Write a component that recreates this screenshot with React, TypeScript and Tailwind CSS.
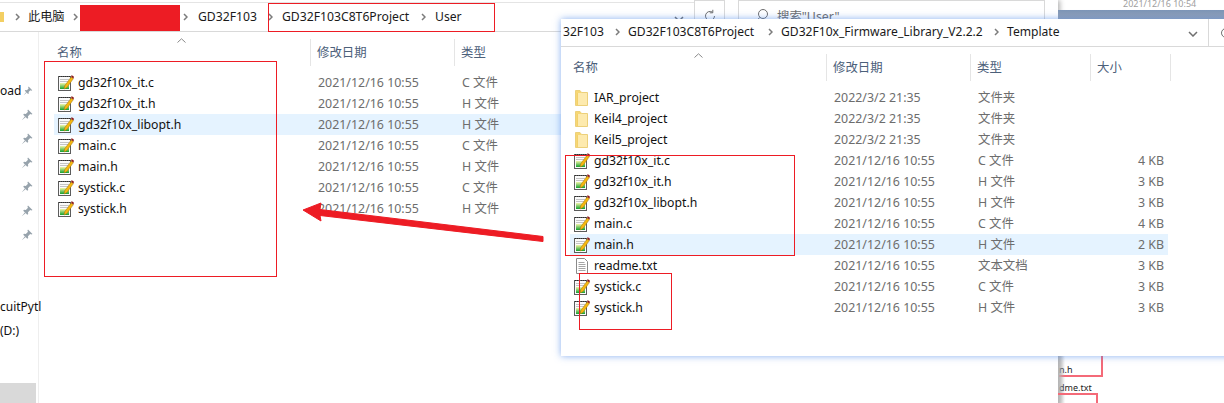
import React from "react";

const font = "font-['Noto_Sans','Noto_Sans_CJK_SC',sans-serif]";

function NoteIcon() {
  return (
    <svg width="16" height="16" viewBox="0 0 16 16" className="shrink-0">
      <defs>
        <linearGradient id="noteGreen" x1="0" y1="0" x2="0" y2="1">
          <stop offset="0" stopColor="#f2f5a8" />
          <stop offset="1" stopColor="#12a02e" />
        </linearGradient>
      </defs>
      <rect x="0.5" y="1.5" width="12" height="14" fill="#fbfbfb" stroke="#5c5c5c" />
      <path d="M1 1.500h11" stroke="#2f2f2f" strokeDasharray="1 1" />
      <path d="M2 4.500h9M2 6.500h9" stroke="#c4c4c4" />
      <rect x="2" y="8" width="9" height="6" fill="url(#noteGreen)" />
      <path d="M13.200 2 15.400 3.600 9 12.400 6 14 6.800 10.600Z" fill="#f6b80f" stroke="#9c7414" strokeWidth="0.5" />
      <path d="M13.600 0 16 1.800 15.400 3.600 13.200 2Z" fill="#8e1a1a" />
    </svg>
  );
}

function FolderIcon() {
  return (
    <svg width="16" height="16" viewBox="0 0 16 16" className="shrink-0">
      <path d="M1.500 0.500h4.500l1.500 2h6v13h-12z" fill="#f7d774" stroke="#ecd07a" />
      <rect x="3.500" y="3" width="9.500" height="12" fill="#fdeaae" />
      <path d="M3.500 3v12" stroke="#f3d06a" />
    </svg>
  );
}

function TextIcon() {
  return (
    <svg width="16" height="16" viewBox="0 0 16 16" className="shrink-0">
      <path d="M2.500 0.500h8l3 3v12h-11z" fill="#fff" stroke="#8a8a8a" />
      <path d="M4.500 4.500h6M4.500 6.500h7M4.500 8.500h7M4.500 10.500h7M4.500 12.500h7" stroke="#a5a5a5" />
    </svg>
  );
}

function Sep() {
  return (
    <svg width="5" height="8" viewBox="0 0 5 8" className="shrink-0">
      <path d="M1 1l3 3-3 3" fill="none" stroke="#7c7c7c" strokeWidth="1.500" />
    </svg>
  );
}

function Pin() {
  return (
    <svg width="12" height="12" viewBox="0 0 12 12">
      <path d="M7 0.500 11.500 5 10.300 5.600 9.200 5 7 7.200 7.200 9 6.300 9.800 2.200 5.700 3 4.800 4.800 5 7 2.800 6.400 1.700Z M3.800 7.500 0.800 11.200 4.500 8.200Z" fill="#97a3ac" />
    </svg>
  );
}

function Caret() {
  return (
    <svg width="9" height="5" viewBox="0 0 9 5">
      <path d="M0.500 4.500 4.500 0.800 8.500 4.500" fill="none" stroke="#8a8a8a" />
    </svg>
  );
}

type F = { name: string; date: string; type: string; size?: string; icon?: "note" | "folder" | "text"; hi?: boolean };

function Row({ f, withSize }: { f: F; withSize?: boolean }) {
  return (
    <div className={`flex h-[21px] items-center whitespace-nowrap ${f.hi ? "bg-[#e5f3ff]" : ""}`}>
      <div className="flex w-[264px] items-center gap-[4px] pl-[4px] text-[#111111]">
        {f.icon === "folder" ? <FolderIcon /> : f.icon === "text" ? <TextIcon /> : <NoteIcon />}
        <span className="pt-[2px] text-[12.25px]">{f.name}</span>
      </div>
      <div className="w-[144px] pt-[2px] text-[#6d6d6d]">{f.date}</div>
      <div className={`${withSize ? "w-[120px]" : ""} pt-[2px] text-[#6d6d6d]`}>{f.type}</div>
      {withSize && <div className="w-[70px] pr-[4px] pt-[2px] text-right text-[#6d6d6d]">{f.size}</div>}
    </div>
  );
}

const d = "2021/12/16 10:55";
const backFiles: F[] = [
  { name: "gd32f10x_it.c", date: d, type: "C 文件" },
  { name: "gd32f10x_it.h", date: d, type: "H 文件" },
  { name: "gd32f10x_libopt.h", date: d, type: "H 文件", hi: true },
  { name: "main.c", date: d, type: "C 文件" },
  { name: "main.h", date: d, type: "H 文件" },
  { name: "systick.c", date: d, type: "C 文件" },
  { name: "systick.h", date: d, type: "H 文件" },
];
const frontFiles: F[] = [
  { name: "IAR_project", date: "2022/3/2 21:35", type: "文件夹", icon: "folder" },
  { name: "Keil4_project", date: "2022/3/2 21:35", type: "文件夹", icon: "folder" },
  { name: "Keil5_project", date: "2022/3/2 21:35", type: "文件夹", icon: "folder" },
  { name: "gd32f10x_it.c", date: d, type: "C 文件", size: "4 KB" },
  { name: "gd32f10x_it.h", date: d, type: "H 文件", size: "3 KB" },
  { name: "gd32f10x_libopt.h", date: d, type: "H 文件", size: "3 KB" },
  { name: "main.c", date: d, type: "C 文件", size: "4 KB" },
  { name: "main.h", date: d, type: "H 文件", size: "2 KB", hi: true },
  { name: "readme.txt", date: d, type: "文本文档", size: "3 KB", icon: "text" },
  { name: "systick.c", date: d, type: "C 文件", size: "3 KB" },
  { name: "systick.h", date: d, type: "H 文件", size: "3 KB" },
];

function Crumb({ w, text, sepW }: { w: string; text: string; sepW: string }) {
  return (
    <div className={`flex items-center whitespace-nowrap ${w}`}>
      <span className={sepW}>{text}</span>
      <Sep />
    </div>
  );
}

export default function App() {
  return (
    <div className={`relative h-[403px] w-[1224px] overflow-hidden bg-white text-[12.4px] ${font}`}>
      {/* back window */}
      <div className="absolute left-0 top-0 flex h-[403px] w-[1058px] flex-col bg-white shadow-[2px_0_5px_rgba(0,0,0,0.3)]">
        <div className="flex h-[32px] shrink-0 items-end border-b border-[#d9d9d9]">
          <div className="flex h-[29px] w-[694px] items-center border-t border-[#e4e4e4] text-[12.2px] text-[#1a1a1a]">
            <div className="h-[10px] w-[4px] bg-[#f3cf63]" />
            <div className="ml-[11px] w-[13px]"><Sep /></div>
            <div className="flex w-[45px] items-center">此电脑</div>
            <div className="w-[110px]"><Sep /></div>
            <div className="w-[15px]"><Sep /></div>
            <div className="w-[70px] whitespace-nowrap">GD32F103</div>
            <div className="w-[14px]"><Sep /></div>
            <Crumb w="w-[153px]" sepW="w-[139px]" text="GD32F103C8T6Project" />
            <span>User</span>
            <svg width="10" height="6" viewBox="0 0 10 6" className="ml-auto mr-[10px] mt-[4px]">
              <path d="M1 1l4 4 4-4" fill="none" stroke="#707070" strokeWidth="1.500" />
            </svg>
          </div>
          <div className="flex h-[31px] w-[31px] items-center justify-center border-x border-t border-[#d9d9d9]">
            <svg width="14" height="14" viewBox="0 0 14 14">
              <path d="M11.500 7a4.500 4.500 0 1 1-2-3.800M9.800 0.800v3h-3" fill="none" stroke="#6e6e6e" />
            </svg>
          </div>
          <div className="ml-[13px] flex h-[31px] w-[307px] items-start gap-[8px] border-x border-t border-[#d9d9d9] pl-[16px] pt-[7px] text-[#6d6d6d]">
            <svg width="14" height="14" viewBox="0 0 14 14">
              <circle cx="8" cy="6" r="4.500" fill="none" stroke="#6e6e6e" />
              <path d="M4.800 9.500 1 13" stroke="#6e6e6e" />
            </svg>
            <span>搜索"User"</span>
          </div>
        </div>
        <div className="flex min-h-0 flex-1">
          <div className="flex w-[39px] shrink-0 flex-col border-r border-[#eeeeee] pt-[47px] text-[12px] text-[#111111]">
            <div className="flex h-[24px] items-center justify-end gap-[2px] pr-[5px]"><span>oad</span><Pin /></div>
            {[0, 1, 2, 3, 4, 5].map((i) => (
              <div key={i} className="flex h-[24px] items-center justify-end pr-[5px]"><Pin /></div>
            ))}
            <div className="h-[48px]" />
            <div className="flex h-[24px] items-center whitespace-nowrap">cuitPytl</div>
            <div className="flex h-[24px] items-center pl-[0px]">(D:)</div>
            <div className="flex-1" />
            <div className="mr-[2px] h-[20px] bg-[#d9d9d9]" />
          </div>
          <div className="flex-1 pl-[15px] pt-[7px]">
            <div className="flex h-[27px] items-start text-[#4c607a]">
              <div className="relative h-full w-[257px] border-r border-[#e5e5e5] pl-[3px] pt-[5px]">
                名称
                <div className="absolute left-[123px] top-[-1px] leading-[0]"><Caret /></div>
              </div>
              <div className="h-full w-[144px] border-r border-[#e5e5e5] pl-[6px] pt-[5px]">修改日期</div>
              <div className="h-full pl-[6px] pt-[5px]">类型</div>
            </div>
            <div className="mt-[6px]">
              {backFiles.map((f) => <Row key={f.name} f={f} />)}
            </div>
          </div>
        </div>
      </div>

      {/* behind, right side */}
      <div className="absolute left-[1058px] top-0 flex h-[403px] w-[166px] flex-col">
        <div className="h-[10px] overflow-hidden pl-[65px] text-[9px] leading-[8px] text-[#a0a0a0]">2021/12/16 10:54</div>
        <div className="h-[9px] bg-gradient-to-b from-[#7d96b8] to-[#98a3b3]" />
        <div className="mt-[337px] flex-1 pl-[1px] text-[9px] text-[#222222]">
          <div className="h-[21px] w-[44px] border-b-2 border-r-2 border-[#f46a78] leading-[28px]">n.h</div>
          <div className="mt-[2px] h-[16px] leading-[18px]">dme.txt</div>
        </div>
        <div className="absolute left-[0px] top-[356px] h-[47px] w-[7px] bg-gradient-to-r from-[#b5b5b5] to-transparent" />
        <div className="absolute left-[0px] top-[393px] h-[10px] w-[40px] border-r-2 border-t-2 border-[#f46a78]" />
      </div>

      {/* front window */}
      <div className="absolute left-[561px] top-[19px] flex h-[337px] w-[700px] flex-col bg-white shadow-[0_0_7px_rgba(70,130,230,0.65)]">
        <div className="flex h-[28px] shrink-0 items-center border-b border-[#d9d9d9] pl-[2px] text-[12.1px] text-[#1a1a1a]">
          <Crumb w="w-[65px]" sepW="w-[52px]" text="32F103" />
          <Crumb w="w-[153px]" sepW="w-[140px]" text="GD32F103C8T6Project" />
          <Crumb w="w-[226px]" sepW="w-[213px]" text="GD32F10x_Firmware_Library_V2.2.2" />
          <span className="w-[181px]">Template</span>
          <svg width="10" height="6" viewBox="0 0 10 6" className="mt-[2px]">
            <path d="M1 1l4 4 4-4" fill="none" stroke="#707070" strokeWidth="1.500" />
          </svg>
          <div className="ml-[10px] h-full border-l border-[#d9d9d9]" />
          <svg width="14" height="14" viewBox="0 0 14 14" className="ml-[10px] shrink-0">
            <path d="M11.500 7a4.500 4.500 0 1 1-2-3.800M9.800 0.800v3h-3" fill="none" stroke="#6e6e6e" />
          </svg>
        </div>
        <div className="pl-[9px] pt-[7px]">
          <div className="flex h-[27px] items-start text-[#4c607a]">
            <div className="relative h-full w-[257px] border-r border-[#e5e5e5] pl-[3px] pt-[5px]">
              名称
              <div className="absolute left-[124px] top-[-1px] leading-[0]"><Caret /></div>
            </div>
            <div className="h-full w-[144px] border-r border-[#e5e5e5] pl-[6px] pt-[5px]">修改日期</div>
            <div className="h-full w-[120px] border-r border-[#e5e5e5] pl-[6px] pt-[5px]">类型</div>
            <div className="h-full w-[80px] border-r border-[#e5e5e5] pl-[6px] pt-[5px]">大小</div>
          </div>
          <div className="mt-[6px] w-[598px]">
            {frontFiles.map((f) => <Row key={f.name} f={f} withSize />)}
          </div>
        </div>
      </div>

      {/* annotations */}
      <div className="absolute left-[80px] top-[5px] h-[26px] w-[100px] bg-[#ed1c24]" />
      <div className="absolute left-[268px] top-[3px] h-[29px] w-[227px] border border-[#ed1c24]" />
      <div className="absolute left-[44px] top-[61px] h-[216px] w-[233px] border border-[#ed1c24]" />
      <div className="absolute left-[565px] top-[155px] h-[101px] w-[230px] border border-[#ed1c24]" />
      <div className="absolute left-[579px] top-[273px] h-[57px] w-[93px] border border-[#ed1c24]" />
      <svg className="absolute left-0 top-0" width="1224" height="403" viewBox="0 0 1224 403">
        <path d="M303 210 321 203 320 209.500 543 236.500 543 241.500 320 215.500 321 221Z" fill="#ed1c24" stroke="#ed1c24" strokeLinejoin="round" />
      </svg>
    </div>
  );
}
